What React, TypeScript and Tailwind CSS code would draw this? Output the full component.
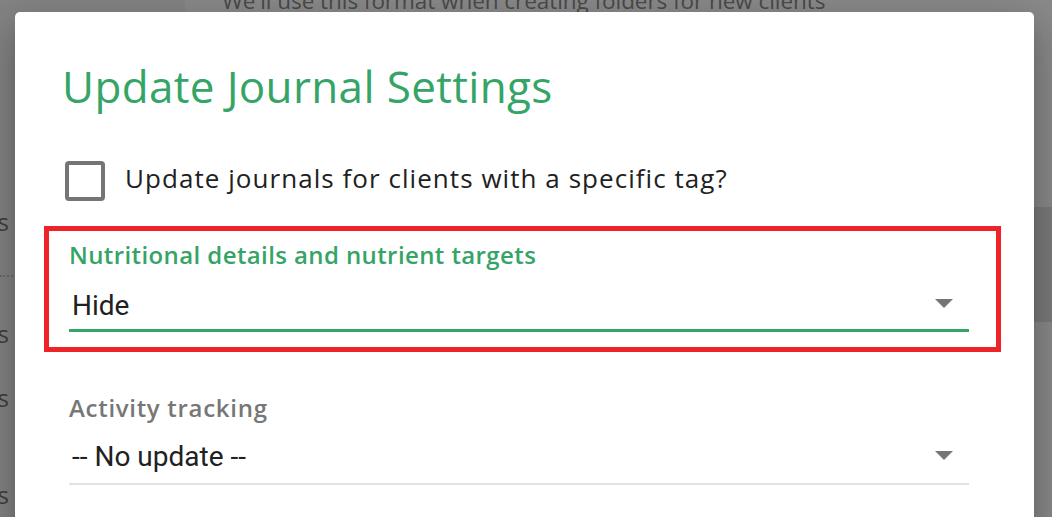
import React from "react";

const OPEN = { fontFamily: '"Open Sans", "Noto Sans", sans-serif' };
const ROBOTO = { fontFamily: 'Roboto, "Liberation Sans", sans-serif' };

function Arrow({ className }: { className?: string }) {
  return (
    <svg width="18" height="9" viewBox="0 0 18 9" className={className}>
      <polygon points="0,0 18,0 9,9" fill="#757575" />
    </svg>
  );
}

function SideItem({ text, className }: { text: string; className?: string }) {
  return (
    <div className={"w-[9px] overflow-hidden flex justify-end " + (className ?? "")}>
      <span className="whitespace-nowrap text-[24px] leading-[26px] text-[#3e3e3e]" style={OPEN}>
        {text}
      </span>
    </div>
  );
}

export default function App() {
  return (
    <div className="relative w-[1052px] h-[517px] overflow-hidden flex bg-[#8a8a8a]">
      {/* sidebar of underlying page */}
      <div className="w-[185px] shrink-0 bg-[#848484] flex flex-col pt-[209px]">
        <SideItem text="Settings" />
        <div className="mt-[40px] w-[185px] border-t-2 border-dotted border-[#6a6a6a]" />
        <SideItem text="Clients" className="mt-[44px]" />
        <SideItem text="Foods" className="mt-[38px]" />
        <SideItem text="Recipes" className="mt-[71px]" />
      </div>
      {/* main of underlying page */}
      <div className="flex-1 flex flex-col">
        <div
          className="-mt-[12px] pl-[37px] text-[22.5px] leading-[26px] tracking-[-0.05px] text-[#4a4a4a] whitespace-nowrap"
          style={OPEN}
        >
          We'll use this format when creating folders for new clients
        </div>
        <div className="mt-[193px] h-[115px] bg-[#7b7b7b]" />
      </div>

      {/* dialog */}
      <div className="absolute left-[15px] top-[12px] w-[1019px] h-[560px] bg-white rounded-[5px] shadow-[0_11px_15px_-7px_rgba(0,0,0,0.2),0_24px_38px_3px_rgba(0,0,0,0.14),0_9px_46px_8px_rgba(0,0,0,0.12)] pt-[48px] pl-[50px] flex flex-col">
        <h1 className="-ml-[3px] text-[44px] leading-[52px] tracking-[0.35px] text-[#35a467]" style={OPEN}>
          Update Journal Settings
        </h1>

        <div className="mt-[49px] flex items-start gap-[20px]">
          <div className="w-[40px] h-[40px] rounded-[4px] border-4 border-[#757575] shrink-0" />
          <span className="-mt-px text-[26px] leading-[36px] tracking-[1.05px] text-[#212121]" style={OPEN}>
            Update journals for clients with a specific tag?
          </span>
        </div>

        <div className="mt-[25px] -ml-[21px] w-[957px] border-[5px] border-[#ee2329] pt-[10px] pl-[20px] pr-[27px] pb-[15px]">
          <div className="w-[900px] flex flex-col">
            <div className="text-[24px] leading-[28px] font-semibold tracking-[0.4px] text-[#35a467]" style={OPEN}>
              Nutritional details and nutrient targets
            </div>
            <div className="mt-[21px] h-[32px] flex justify-between pl-[3px] pr-[16px]">
              <span className="text-[28px] leading-[32px] text-[#212121]" style={ROBOTO}>
                Hide
              </span>
              <Arrow className="mt-[9px]" />
            </div>
            <div className="mt-[7px] h-[3px] bg-[#35a467]" />
          </div>
        </div>

        <div className="mt-[42px] ml-[4px] w-[900px] flex flex-col">
          <div className="text-[24px] leading-[28px] font-semibold tracking-[0.7px] text-[#777777]" style={OPEN}>
            Activity tracking
          </div>
          <div className="mt-[19px] h-[32px] flex justify-between pl-[3px] pr-[16px]">
            <span className="text-[28px] leading-[32px] text-[#212121]" style={ROBOTO}>
              -- No update --
            </span>
            <Arrow className="mt-[10px]" />
          </div>
          <div className="mt-[10px] h-[2px] bg-[#e2e2e2]" />
        </div>
      </div>
    </div>
  );
}
